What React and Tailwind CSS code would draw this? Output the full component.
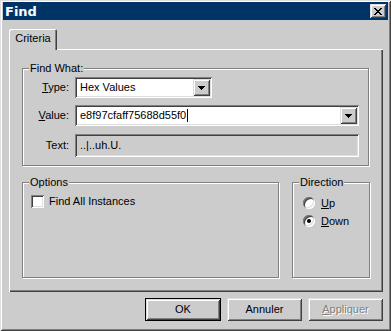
import { useState } from "react";

const raised =
  "shadow-[inset_1px_1px_0_#dfdfdf,inset_-1px_-1px_0_#404040,inset_2px_2px_0_#fff,inset_-2px_-2px_0_#808080]";
const sunken =
  "shadow-[inset_1px_1px_0_#808080,inset_-1px_-1px_0_#fff,inset_2px_2px_0_#404040,inset_-2px_-2px_0_#dfdfdf]";

function DropArrow() {
  return (
    <svg width="7" height="4" viewBox="0 0 7 4">
      <path d="M0 0h7v1H0zM1 1h5v1H1zM2 2h3v1H2zM3 3h1v1H3z" fill="#000" />
    </svg>
  );
}

function Combo({ value, caret, width }) {
  return (
    <div className={`flex h-[21px] bg-white p-[2px] ${sunken} ${width}`}>
      <div className="flex flex-1 items-center pl-[3px] text-black">
        {value}
        {caret && <span className="ml-px inline-block h-[13px] w-px bg-black" />}
      </div>
      <div className={`flex h-[17px] w-[17px] items-center justify-center bg-[#cccccc] ${raised}`}>
        <DropArrow />
      </div>
    </div>
  );
}

function Group({ label, className, children }) {
  return (
    <div
      className={`relative border border-[#808080] shadow-[1px_1px_0_#fff,inset_1px_1px_0_#fff] ${className}`}
    >
      <span className="absolute left-[6px] top-[-8px] bg-[#cccccc] px-[1px] leading-[14px]">
        {label}
      </span>
      {children}
    </div>
  );
}

function Radio({ checked, onClick, children }) {
  return (
    <div className="flex h-[18px] items-center gap-[6px]" onClick={onClick}>
      <div
        className={`flex h-[12px] w-[12px] items-center justify-center rounded-full bg-white ${sunken}`}
      >
        {checked && <div className="h-[4px] w-[4px] rounded-full bg-black" />}
      </div>
      <span>{children}</span>
    </div>
  );
}

export default function App() {
  const [dir, setDir] = useState("down");
  const [all, setAll] = useState(false);

  return (
    <div
      className={`flex h-[331px] w-[391px] flex-col bg-[#cccccc] px-[3px] pt-[2px] text-[11px] text-black ${raised}`}
      style={{ fontFamily: '"Liberation Sans", Arial, sans-serif' }}
    >
      {/* title bar */}
      <div className="flex h-[18px] items-center justify-between bg-[#003366] pl-[2px] pr-[2px]">
        <span
          className="text-[13px] font-bold leading-none text-white"
          style={{ fontFamily: '"DejaVu Sans", Verdana, sans-serif' }}
        >
          Find
        </span>
        <div className={`flex h-[14px] w-[16px] items-center justify-center bg-[#cccccc] ${raised}`}>
          <svg width="8" height="7" viewBox="0 0 8 7">
            <path
              d="M0 0h2v1H0zM6 0h2v1H6zM1 1h2v1H1zM5 1h2v1H5zM2 2h4v1H2zM3 3h2v1H3zM2 4h4v1H2zM1 5h2v1H1zM5 5h2v1H5zM0 6h2v1H0zM6 6h2v1H6z"
              fill="#000"
            />
          </svg>
        </div>
      </div>

      {/* tab */}
      <div className="ml-[6px] mt-[9px] flex">
        <div className="relative z-10 -mb-px flex h-[21px] w-[48px] items-center justify-center rounded-t-[2px] bg-[#cccccc] pb-[2px] shadow-[inset_1px_1px_0_#fff,inset_-1px_0_0_#404040,inset_-2px_0_0_#808080]">
          Criteria
        </div>
      </div>

      {/* panel */}
      <div
        className="ml-[6px] flex h-[243px] w-[374px] flex-col gap-[16px] px-[13px] pt-[19px] shadow-[inset_1px_1px_0_#fff,inset_-1px_-1px_0_#404040,inset_-2px_-2px_0_#808080]"
      >
        <Group label="Find What:" className="h-[98px] w-[347px]">
          <div className="flex flex-col pt-[8px]">
            <div className="flex items-center gap-[6px]">
              <span className="w-[46px] text-right">
                <span className="underline">T</span>ype:
              </span>
              <Combo value="Hex Values" width="w-[137px]" />
            </div>
            <div className="mt-[7px] flex items-center gap-[6px]">
              <span className="w-[46px] text-right">
                <span className="underline">V</span>alue:
              </span>
              <Combo value="e8f97cfaff75688d55f0" caret width="w-[284px]" />
            </div>
            <div className="mt-[8px] flex items-center gap-[6px]">
              <span className="w-[46px] text-right">Text:</span>
              <div className={`flex h-[23px] w-[284px] items-center bg-[#cccccc] pl-[5px] ${sunken}`}>
                ..|..uh.U.
              </div>
            </div>
          </div>
        </Group>

        <div className="flex gap-[13px]">
          <Group label="Options" className="h-[96px] w-[257px]">
            <div className="flex items-center gap-[5px] pl-[8px] pt-[10px]" onClick={() => setAll(!all)}>
              <div className={`flex h-[13px] w-[13px] items-center justify-center bg-white ${sunken}`}>
                {all && (
                  <svg width="7" height="7" viewBox="0 0 7 7">
                    <path d="M0 2l2 2 5-4v2L2 6 0 4z" fill="#000" />
                  </svg>
                )}
              </div>
              <span>Find All Instances</span>
            </div>
          </Group>
          <Group label="Direction" className="h-[96px] w-[78px]">
            <div className="flex flex-col pl-[10px] pt-[11px]">
              <Radio checked={dir === "up"} onClick={() => setDir("up")}>
                <span className="underline">U</span>p
              </Radio>
              <Radio checked={dir === "down"} onClick={() => setDir("down")}>
                <span className="underline">D</span>own
              </Radio>
            </div>
          </Group>
        </div>
      </div>

      {/* buttons */}
      <div className="mt-[6px] flex justify-end gap-[6px] pr-[5px]">
        <div className="h-[23px] w-[76px] border border-black">
          <div className={`flex h-full w-full items-center justify-center bg-[#cccccc] ${raised}`}>OK</div>
        </div>
        <div className={`flex h-[23px] w-[75px] items-center justify-center bg-[#cccccc] ${raised}`}>
          Annuler
        </div>
        <div
          className={`flex h-[23px] w-[75px] items-center justify-center bg-[#cccccc] text-[#808080] [text-shadow:1px_1px_0_#fff] ${raised}`}
        >
          <span>
            <span className="underline">A</span>ppliquer
          </span>
        </div>
      </div>
    </div>
  );
}
